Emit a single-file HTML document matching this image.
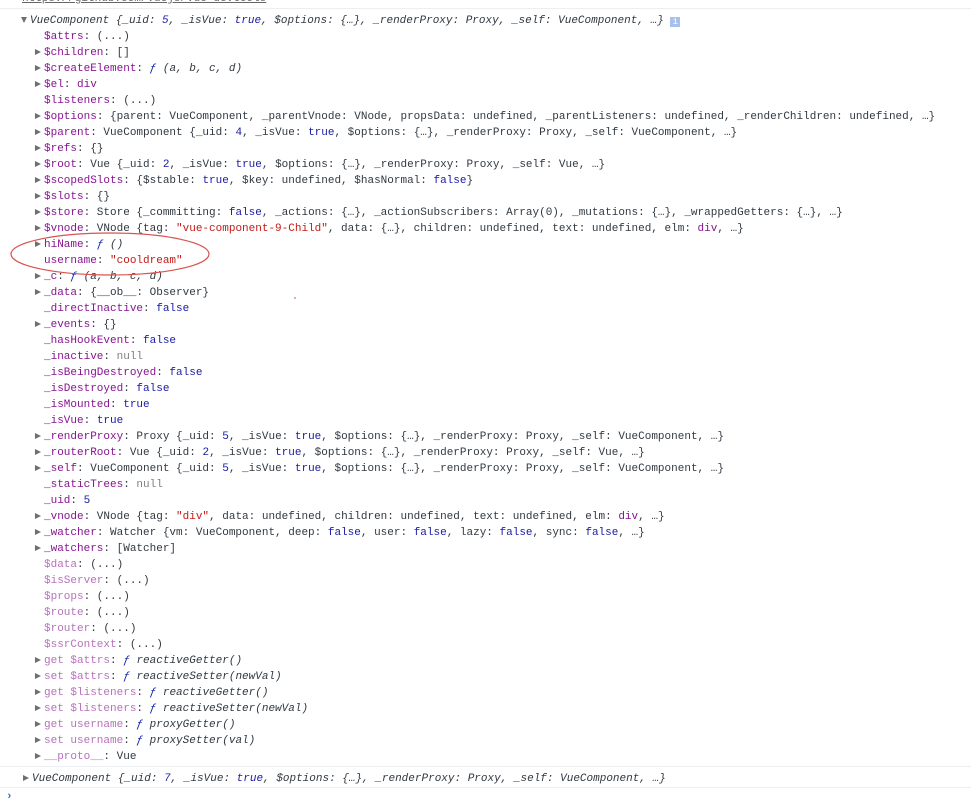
<!DOCTYPE html>
<html><head><meta charset="utf-8"><style>
body{margin:0;background:#fff;width:971px;height:801px;overflow:hidden;position:relative;font-family:"Liberation Mono",monospace;font-size:11px;color:#303942}
.url{position:absolute;left:22px;top:-9px;color:#666;text-decoration:underline;line-height:16px}
.sep{position:absolute;left:0;width:971px;height:1px;background:#eceff1}
.l{position:absolute;height:16px;line-height:16px;white-space:pre}
.t{display:inline-block;width:0;height:0;border-left:6px solid #6e6e6e;border-top:3.5px solid transparent;border-bottom:3.5px solid transparent;margin-right:3px;vertical-align:0px}
.td{border-left:3.5px solid transparent;border-right:3.5px solid transparent;border-top:6px solid #6e6e6e;border-bottom:0;margin-right:3px;margin-left:-1px}
.k{color:#881391}.kd{color:#b871bd}.s{color:#c41a16}.n{color:#1a1aa6}.f{color:#0d22aa;font-style:italic}.i{font-style:italic}
</style></head><body>
<div class="url">https://github.com/vuejs/vue-devtools</div>
<div class="sep" style="top:8px"></div>
<div class="l" style="left:22px;top:13px"><span class="t td"></span><span class="i">VueComponent {_uid: <span class="n">5</span>, _isVue: <span class="n">true</span>, $options: {…}, _renderProxy: Proxy, _self: VueComponent, …}</span> <span style="display:inline-block;width:10px;height:10px;background:#a8c0ec;color:#fff;font-size:9px;line-height:10px;text-align:center;vertical-align:-1px">i</span></div>
<div style="position:absolute;left:35px;top:29px">
<div class="l" style="top:0;left:9px"><span class="k">$attrs</span>: (...)</div>
<div class="l" style="top:16px"><span class="t"></span><span class="k">$children</span>: []</div>
<div class="l" style="top:32px"><span class="t"></span><span class="k">$createElement</span>: <span class="f">ƒ</span> <span class="i">(a, b, c, d)</span></div>
<div class="l" style="top:48px"><span class="t"></span><span class="k">$el</span>: <span class="k">div</span></div>
<div class="l" style="top:64px;left:9px"><span class="k">$listeners</span>: (...)</div>
<div class="l" style="top:80px"><span class="t"></span><span class="k">$options</span>: {parent: VueComponent, _parentVnode: VNode, propsData: undefined, _parentListeners: undefined, _renderChildren: undefined, …}</div>
<div class="l" style="top:96px"><span class="t"></span><span class="k">$parent</span>: VueComponent {_uid: <span class="n">4</span>, _isVue: <span class="n">true</span>, $options: {…}, _renderProxy: Proxy, _self: VueComponent, …}</div>
<div class="l" style="top:112px"><span class="t"></span><span class="k">$refs</span>: {}</div>
<div class="l" style="top:128px"><span class="t"></span><span class="k">$root</span>: Vue {_uid: <span class="n">2</span>, _isVue: <span class="n">true</span>, $options: {…}, _renderProxy: Proxy, _self: Vue, …}</div>
<div class="l" style="top:144px"><span class="t"></span><span class="k">$scopedSlots</span>: {$stable: <span class="n">true</span>, $key: undefined, $hasNormal: <span class="n">false</span>}</div>
<div class="l" style="top:160px"><span class="t"></span><span class="k">$slots</span>: {}</div>
<div class="l" style="top:176px"><span class="t"></span><span class="k">$store</span>: Store {_committing: <span class="n">false</span>, _actions: {…}, _actionSubscribers: Array(0), _mutations: {…}, _wrappedGetters: {…}, …}</div>
<div class="l" style="top:192px"><span class="t"></span><span class="k">$vnode</span>: VNode {tag: <span class="s">"vue-component-9-Child"</span>, data: {…}, children: undefined, text: undefined, elm: <span class="k">div</span>, …}</div>
<div class="l" style="top:208px"><span class="t"></span><span class="k">hiName</span>: <span class="f">ƒ</span> <span class="i">()</span></div>
<div class="l" style="top:224px;left:9px"><span class="k">username</span>: <span class="s">"cooldream"</span></div>
<div class="l" style="top:240px"><span class="t"></span><span class="k">_c</span>: <span class="f">ƒ</span> <span class="i">(a, b, c, d)</span></div>
<div class="l" style="top:256px"><span class="t"></span><span class="k">_data</span>: {__ob__: Observer}</div>
<div class="l" style="top:272px;left:9px"><span class="k">_directInactive</span>: <span class="n">false</span></div>
<div class="l" style="top:288px"><span class="t"></span><span class="k">_events</span>: {}</div>
<div class="l" style="top:304px;left:9px"><span class="k">_hasHookEvent</span>: <span class="n">false</span></div>
<div class="l" style="top:320px;left:9px"><span class="k">_inactive</span>: <span style="color:#808080">null</span></div>
<div class="l" style="top:336px;left:9px"><span class="k">_isBeingDestroyed</span>: <span class="n">false</span></div>
<div class="l" style="top:352px;left:9px"><span class="k">_isDestroyed</span>: <span class="n">false</span></div>
<div class="l" style="top:368px;left:9px"><span class="k">_isMounted</span>: <span class="n">true</span></div>
<div class="l" style="top:384px;left:9px"><span class="k">_isVue</span>: <span class="n">true</span></div>
<div class="l" style="top:400px"><span class="t"></span><span class="k">_renderProxy</span>: Proxy {_uid: <span class="n">5</span>, _isVue: <span class="n">true</span>, $options: {…}, _renderProxy: Proxy, _self: VueComponent, …}</div>
<div class="l" style="top:416px"><span class="t"></span><span class="k">_routerRoot</span>: Vue {_uid: <span class="n">2</span>, _isVue: <span class="n">true</span>, $options: {…}, _renderProxy: Proxy, _self: Vue, …}</div>
<div class="l" style="top:432px"><span class="t"></span><span class="k">_self</span>: VueComponent {_uid: <span class="n">5</span>, _isVue: <span class="n">true</span>, $options: {…}, _renderProxy: Proxy, _self: VueComponent, …}</div>
<div class="l" style="top:448px;left:9px"><span class="k">_staticTrees</span>: <span style="color:#808080">null</span></div>
<div class="l" style="top:464px;left:9px"><span class="k">_uid</span>: <span class="n">5</span></div>
<div class="l" style="top:480px"><span class="t"></span><span class="k">_vnode</span>: VNode {tag: <span class="s">"div"</span>, data: undefined, children: undefined, text: undefined, elm: <span class="k">div</span>, …}</div>
<div class="l" style="top:496px"><span class="t"></span><span class="k">_watcher</span>: Watcher {vm: VueComponent, deep: <span class="n">false</span>, user: <span class="n">false</span>, lazy: <span class="n">false</span>, sync: <span class="n">false</span>, …}</div>
<div class="l" style="top:512px"><span class="t"></span><span class="k">_watchers</span>: [Watcher]</div>
<div class="l" style="top:528px;left:9px"><span class="kd">$data</span>: (...)</div>
<div class="l" style="top:544px;left:9px"><span class="kd">$isServer</span>: (...)</div>
<div class="l" style="top:560px;left:9px"><span class="kd">$props</span>: (...)</div>
<div class="l" style="top:576px;left:9px"><span class="kd">$route</span>: (...)</div>
<div class="l" style="top:592px;left:9px"><span class="kd">$router</span>: (...)</div>
<div class="l" style="top:608px;left:9px"><span class="kd">$ssrContext</span>: (...)</div>
<div class="l" style="top:624px"><span class="t"></span><span class="kd">get $attrs</span>: <span class="f">ƒ</span> <span class="i">reactiveGetter()</span></div>
<div class="l" style="top:640px"><span class="t"></span><span class="kd">set $attrs</span>: <span class="f">ƒ</span> <span class="i">reactiveSetter(newVal)</span></div>
<div class="l" style="top:656px"><span class="t"></span><span class="kd">get $listeners</span>: <span class="f">ƒ</span> <span class="i">reactiveGetter()</span></div>
<div class="l" style="top:672px"><span class="t"></span><span class="kd">set $listeners</span>: <span class="f">ƒ</span> <span class="i">reactiveSetter(newVal)</span></div>
<div class="l" style="top:688px"><span class="t"></span><span class="kd">get username</span>: <span class="f">ƒ</span> <span class="i">proxyGetter()</span></div>
<div class="l" style="top:704px"><span class="t"></span><span class="kd">set username</span>: <span class="f">ƒ</span> <span class="i">proxySetter(val)</span></div>
<div class="l" style="top:720px"><span class="t"></span><span class="kd">__proto__</span>: Vue</div>
</div>
<div class="sep" style="top:766px"></div>
<div class="l" style="left:23px;top:771px"><span class="t"></span><span class="i">VueComponent {_uid: <span class="n">7</span>, _isVue: <span class="n">true</span>, $options: {…}, _renderProxy: Proxy, _self: VueComponent, …}</span></div>
<div class="sep" style="top:787px"></div>
<div class="l" style="left:6px;top:789px;color:#2a6fdb;font-weight:bold">›</div>
<svg style="position:absolute;left:0;top:0" width="971" height="801"><ellipse cx="110" cy="254" rx="99" ry="21" fill="none" stroke="#d9534f" stroke-width="1.2"/><circle cx="295" cy="298" r="0.8" fill="#c44"/></svg>
</body></html>
